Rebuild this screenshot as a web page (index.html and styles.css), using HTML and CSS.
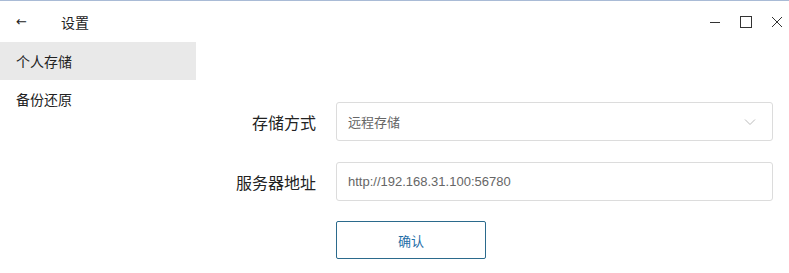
FILE: index.html
```html
<!DOCTYPE html>
<html lang="zh">
<head>
<meta charset="utf-8">
<link rel="stylesheet" href="styles.css">
</head>
<body>
<div class="window">
  <div class="titlebar">
    <div class="title-left">
      <span class="back">←</span>
      <span class="title">设置</span>
    </div>
    <div class="controls">
      <svg class="ctl" width="12" height="12" viewBox="0 0 12 12"><path d="M1 6.5h10" stroke="#333" stroke-width="1"/></svg>
      <svg class="ctl" width="12" height="12" viewBox="0 0 12 12"><rect x="0.5" y="0.5" width="11" height="11" fill="none" stroke="#333" stroke-width="1"/></svg>
      <svg class="ctl" width="12" height="12" viewBox="0 0 12 12"><path d="M1 1l10 10M11 1L1 11" stroke="#333" stroke-width="1"/></svg>
    </div>
  </div>
  <div class="body">
    <nav class="sidebar">
      <div class="nav-item active">个人存储</div>
      <div class="nav-item">备份还原</div>
    </nav>
    <main class="content">
      <div class="form">
        <div class="row">
          <label class="label">存储方式</label>
          <div class="field select">
            <span>远程存储</span>
            <svg width="12" height="8" viewBox="0 0 12 8"><path d="M1 1.5l5 5 5-5" fill="none" stroke="#bbb" stroke-width="1"/></svg>
          </div>
        </div>
        <div class="row">
          <label class="label">服务器地址</label>
          <div class="field"><span>http://192.168.31.100:56780</span></div>
        </div>
        <div class="row">
          <span class="label"></span>
          <button class="btn">确认</button>
        </div>
      </div>
    </main>
  </div>
</div>
</body>
</html>
```
FILE: styles.css
```css
html, body {
  margin: 0;
  padding: 0;
  background: #fff;
}
body {
  font-family: "Microsoft YaHei", "Noto Sans CJK SC", "Liberation Sans", sans-serif;
  color: #222;
}
.window {
  width: 789px;
  height: 273px;
  border-top: 1px solid #a9bbd6;
  box-sizing: border-box;
  display: flex;
  flex-direction: column;
  overflow: hidden;
}
.titlebar {
  height: 41px;
  display: flex;
  align-items: center;
  justify-content: space-between;
}
.title-left {
  display: flex;
  align-items: center;
  padding-left: 16px;
}
.back {
  font-family: "DejaVu Sans", sans-serif;
  font-size: 13px;
  width: 45px;
  color: #222;
}
.title {
  font-size: 14px;
}
.controls {
  display: flex;
  gap: 19px;
  padding-right: 6px;
  align-items: center;
}
.ctl {
  display: block;
}
.body {
  flex: 1;
  display: flex;
}
.sidebar {
  width: 196px;
  display: flex;
  flex-direction: column;
}
.nav-item {
  height: 38px;
  line-height: 38px;
  padding-left: 16px;
  font-size: 14px;
}
.nav-item.active {
  background: #e9e9e9;
}
.content {
  flex: 1;
  padding-top: 60px;
}
.form {
  display: flex;
  flex-direction: column;
  gap: 21px;
}
.row {
  display: flex;
  align-items: center;
}
.label {
  width: 120px;
  text-align: right;
  padding-right: 20px;
  font-size: 16px;
  color: #222;
}
.field {
  width: 437px;
  height: 39px;
  box-sizing: border-box;
  border: 1px solid #dcdcdc;
  border-radius: 3px;
  display: flex;
  align-items: center;
  justify-content: space-between;
  padding: 0 16px 0 11px;
  font-size: 13px;
  color: #666;
  font-family: "Liberation Sans", "Noto Sans CJK SC", sans-serif;
}
.btn {
  width: 150px;
  height: 38px;
  box-sizing: border-box;
  border: 1px solid #2b6a8c;
  border-radius: 2px;
  background: #fff;
  color: #1f6fa8;
  font-size: 13px;
  font-family: "Noto Sans CJK SC", sans-serif;
  margin-top: -1px;
}
```
